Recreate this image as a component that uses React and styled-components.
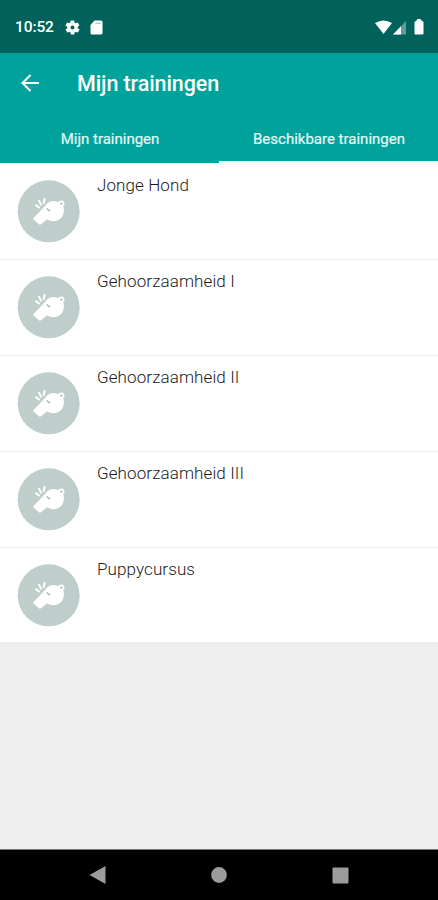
import React from 'react';
import styled, { createGlobalStyle } from 'styled-components';

const GlobalStyle = createGlobalStyle`
  * { box-sizing: border-box; }
  body { margin: 0; font-family: Roboto, sans-serif; background: #eeeeee; }
`;

const Screen = styled.div`
  width: 438px;
  height: 900px;
  display: flex;
  flex-direction: column;
  background: #eeeeee;
  overflow: hidden;
`;

const StatusBar = styled.div`
  flex: none;
  height: 53px;
  padding: 1px 14px 0 15px;
  display: flex;
  align-items: center;
  justify-content: space-between;
  background: #00625b;
  color: #fff;
`;

const StatusGroup = styled.div`
  display: flex;
  align-items: center;
`;

const Clock = styled.span`
  width: 49px;
  font-size: 15.5px;
  font-weight: 500;
  letter-spacing: -0.1px;
  line-height: 18px;
`;

const Icon = styled.svg`
  display: block;
  flex: none;
  margin-left: ${(p) => p.$gap || 0}px;
`;

const AppBar = styled.header`
  flex: none;
  height: 110px;
  display: flex;
  flex-direction: column;
  background: #00a39b;
  color: #fff;
`;

const TitleRow = styled.div`
  height: 60px;
  padding-left: 21px;
  display: flex;
  align-items: center;
`;

const Title = styled.h1`
  margin: 2px 0 0 38px;
  font-size: 21.5px;
  line-height: 26px;
  font-weight: 500;
  letter-spacing: -0.1px;
`;

const Tabs = styled.nav`
  flex: 1;
  display: grid;
  grid-template-columns: 219px 219px;
`;

const Tab = styled.div`
  padding: 17px 0 0 1px;
  text-align: center;
  font-size: 15px;
  line-height: 18px;
  color: #e8f8f6;
  -webkit-text-stroke: 0.2px #e8f8f6;
  border-bottom: 2px solid ${(p) => (p.$active ? '#00a39b' : '#fbfefe')};
`;

const List = styled.main`
  flex: none;
  height: 479px;
  background: #fff;
`;

const Row = styled.div`
  height: 96px;
  padding: 17px 17px 0;
  display: flex;
  gap: 17px;

  & + & {
    padding-top: 16px;
    border-top: 1px solid #eeeeee;
  }
`;

const RowTitle = styled.div`
  margin-top: -5px;
  font-size: 17px;
  line-height: 20px;
  font-weight: 300;
  letter-spacing: 0.1px;
  color: #1c1c1c;
`;

const NavBar = styled.footer`
  flex: none;
  height: 51px;
  margin-top: auto;
  padding: 0 37px;
  display: grid;
  grid-template-columns: repeat(3, 1fr);
  place-items: center;
  background: #000;
  border-top: 1px solid #777;
`;

const Whistle = () => (
  <Icon width="63" height="63" viewBox="26 29 189 189">
    <circle cx="121" cy="123" r="93" fill="#bfcdcb" />
    <path
      d="M76 143 L119 97 Q126 91 136 92 L151 95 Q167 103 167 122 Q164 151 137 153 Q124 153 116 147 L98 162 Q94 165 91 161 L75 147 Q73 145 76 143 Z"
      fill="#fff"
    />
    <path
      d="M83 105 L92 111 M92 91 L98 103 M109 85 L106 98"
      fill="none"
      stroke="#fff"
      strokeWidth="6"
      strokeLinecap="round"
    />
    <circle cx="159" cy="100" r="6.5" fill="#bfcdcb" stroke="#fff" strokeWidth="5.5" />
    <path d="M115 115 L125 122" stroke="#a3b5b2" strokeWidth="4" />
  </Icon>
);

const trainings = [
  'Jonge Hond',
  'Gehoorzaamheid I',
  'Gehoorzaamheid II',
  'Gehoorzaamheid III',
  'Puppycursus',
];

export default function App() {
  return (
    <Screen>
      <GlobalStyle />
      <StatusBar>
        <StatusGroup>
          <Clock>10:52</Clock>
          <Icon width="17" height="17" viewBox="0 0 24 24" fill="#fff">
            <path d="M19.4 13a7.5 7.5 0 0 0 0-2l2.1-1.6a.5.5 0 0 0 .1-.7l-2-3.4a.5.5 0 0 0-.6-.2l-2.500 1a7.300 7.300 0 0 0-1.700-1l-.4-2.700a.5.5 0 0 0-.5-.4h-4a.5.5 0 0 0-.5.4l-.4 2.700a7.300 7.300 0 0 0-1.700 1l-2.500-1a.5.5 0 0 0-.6.2l-2 3.400a.5.5 0 0 0 .1.700L4.600 11a7.500 7.500 0 0 0 0 2l-2.100 1.600a.5.5 0 0 0-.1.700l2 3.400c.1.2.4.3.6.2l2.500-1c.5.4 1.100.8 1.700 1l.4 2.700c0 .2.2.4.5.4h4c.2 0 .5-.2.5-.4l.4-2.700c.6-.2 1.200-.6 1.700-1l2.500 1c.2.100.5 0 .6-.2l2-3.400a.5.5 0 0 0-.1-.7zM12 14.800a2.800 2.800 0 1 1 0-5.600 2.800 2.800 0 0 1 0 5.600z" />
          </Icon>
          <Icon $gap={9} width="13" height="15" viewBox="0 0 13 15">
            <path d="M4.500 0.500H11Q12.500 0.500 12.500 2V13Q12.500 14.500 11 14.500H2Q.5 14.500.5 13V5Z" fill="#fff" />
            <path d="M5.500 3.200H11" stroke="#a9c9c6" strokeWidth="1.300" />
          </Icon>
        </StatusGroup>
        <StatusGroup>
          <Icon width="17" height="15" viewBox="0 0 17 15">
            <path d="M0 3Q8.500-2 17 3L8.500 14Z" fill="#fff" />
          </Icon>
          <Icon $gap={1.5} width="14" height="15" viewBox="0 0 14 15">
            <path d="M0 14.500L13 1V14.500Z" fill="#5d9f9a" />
            <path d="M0 14.500L8 6.200V14.500Z" fill="#fff" />
          </Icon>
          <Icon $gap={7} width="10" height="16" viewBox="0 0 10 16">
            <path d="M3.500 0H6.500L7.500 1.500L9.500 3V14.500Q9.500 15.500 8.500 15.500H1.500Q.5 15.500 .5 14.500V3L2.500 1.500Z" fill="#fff" />
          </Icon>
        </StatusGroup>
      </StatusBar>
      <AppBar>
        <TitleRow>
          <Icon width="18" height="18" viewBox="0 0 18 18" fill="none" stroke="#fff" strokeWidth="2">
            <path d="M18 9H2M9.500 1L1.500 9L9.500 17" />
          </Icon>
          <Title>Mijn trainingen</Title>
        </TitleRow>
        <Tabs>
          <Tab $active>Mijn trainingen</Tab>
          <Tab>Beschikbare trainingen</Tab>
        </Tabs>
      </AppBar>
      <List>
        {trainings.map((name) => (
          <Row key={name}>
            <Whistle />
            <RowTitle>{name}</RowTitle>
          </Row>
        ))}
      </List>
      <NavBar>
        <Icon width="18" height="20" viewBox="0 0 18 20">
          <path d="M0.500 10L16.500 1V19Z" fill="#9c9c9c" />
        </Icon>
        <Icon width="16" height="16" viewBox="0 0 16 16">
          <circle cx="8" cy="8" r="7.900" fill="#9c9c9c" />
        </Icon>
        <Icon width="17" height="17" viewBox="0 0 17 17">
          <rect x="0.500" y="0.500" width="16" height="16" rx="1" fill="#9c9c9c" />
        </Icon>
      </NavBar>
    </Screen>
  );
}
